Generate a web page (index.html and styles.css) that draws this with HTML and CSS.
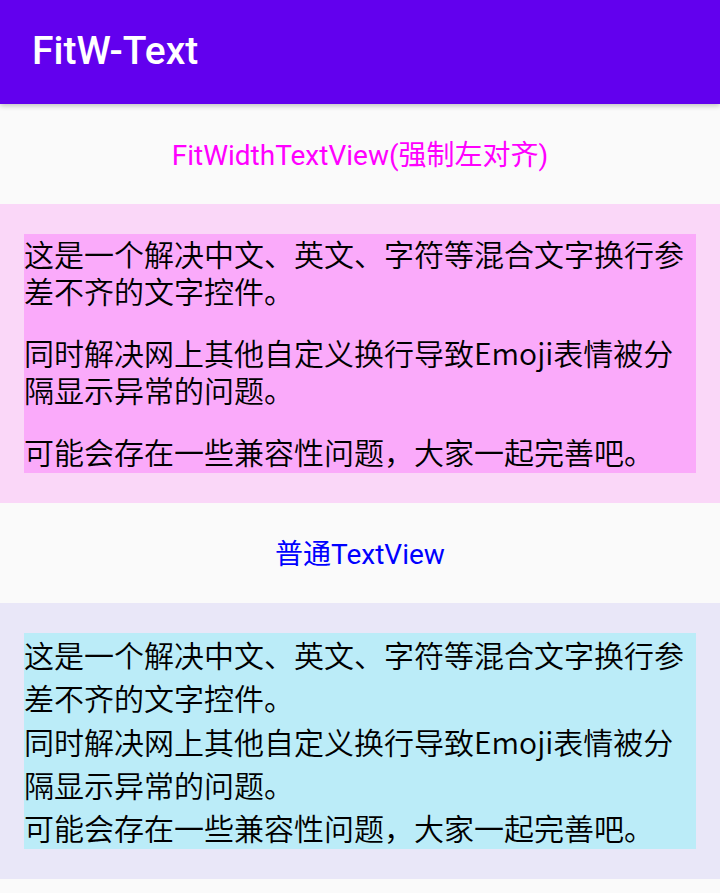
FILE: index.html
```html
<!DOCTYPE html>
<html lang="zh-CN">
<head>
<meta charset="utf-8">
<title>FitW-Text</title>
<link rel="stylesheet" href="styles.css">
</head>
<body>
<header class="app-bar">
  <h1 class="app-title">FitW-Text</h1>
</header>
<main class="content">
  <section class="label-band">
    <span class="label label-fit">FitWidthTextView(强制左对齐)</span>
  </section>
  <section class="panel panel-fit">
    <div class="text-box text-fit">
      <p class="para">这是一个解决中文、英文、字符等混合文字换行参差不齐的文字控件。</p>
      <p class="para">同时解决网上其他自定义换行导致Emoji表情被分隔显示异常的问题。</p>
      <p class="para">可能会存在一些兼容性问题，大家一起完善吧。</p>
    </div>
  </section>
  <section class="label-band">
    <span class="label label-normal">普通TextView</span>
  </section>
  <section class="panel panel-normal">
    <div class="text-box text-normal">这是一个解决中文、英文、字符等混合文字换行参差不齐的文字控件。<br>同时解决网上其他自定义换行导致Emoji表情被分隔显示异常的问题。<br>可能会存在一些兼容性问题，大家一起完善吧。</div>
  </section>
</main>
</body>
</html>
```

FILE: styles.css
```css
* { box-sizing: border-box; }

html, body {
  margin: 0;
  padding: 0;
  background: #fafafa;
  width: 720px;
  height: 893px;
  overflow: hidden;
}

body {
  font-family: Roboto, "Noto Sans CJK SC", sans-serif;
}

.app-bar {
  height: 104px;
  background: #6200ee;
  display: flex;
  align-items: center;
  padding-left: 32px;
  box-shadow: 0 2px 5px rgba(0, 0, 0, 0.22);
  position: relative;
  z-index: 1;
}

.app-title {
  margin: 0;
  color: #ffffff;
  font-family: Roboto, sans-serif;
  font-weight: 500;
  font-size: 39px;
  line-height: 1;
  padding-bottom: 2px;
}

.content {
  display: flex;
  flex-direction: column;
}

.label-band {
  height: 100px;
  display: flex;
  align-items: center;
  justify-content: center;
}

.label {
  font-family: Roboto, "Noto Sans CJK SC", sans-serif;
  font-size: 28px;
  line-height: 1;
  padding-top: 4px;
}

.label-fit { color: #ff00ff; }
.label-normal { color: #0000ff; }

.panel {
  padding: 30px 24px;
}

.panel-fit { background: #fad7f8; }
.panel-normal { background: #e9e7f8; }

.text-box {
  font-family: "Noto Sans CJK SC", sans-serif;
  font-weight: 350;
  font-size: 30px;
  color: #000000;
  padding-right: 6px;
}

.text-fit {
  background: #faaafa;
  padding-top: 1px;
  padding-bottom: 3px;
  line-height: 37px;
}

.para {
  margin: 0;
}

.para + .para {
  margin-top: 25px;
}

.text-normal {
  background: #bbecf8;
  line-height: 43.3px;
}
```
